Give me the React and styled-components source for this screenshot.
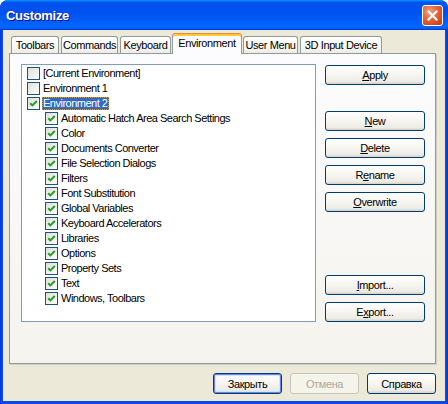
import React from 'react'
import styled, { createGlobalStyle } from 'styled-components'

const GlobalStyle = createGlobalStyle`
  html, body { margin: 0; padding: 0; background: #ffffff; }
  body { font-family: "Liberation Sans", Arial, sans-serif; }
`

const tabs = [
  { label: 'Toolbars', w: 48 },
  { label: 'Commands', w: 57 },
  { label: 'Keyboard', w: 51 },
  { label: 'Environment', w: 70, active: true },
  { label: 'User Menu', w: 55 },
  { label: '3D Input Device', w: 82 },
]

const items = [
  { label: '[Current Environment]', level: 0, checked: false },
  { label: 'Environment 1', level: 0, checked: false },
  { label: 'Environment 2', level: 0, checked: true, selected: true },
  { label: 'Automatic Hatch Area Search Settings', level: 1, checked: true },
  { label: 'Color', level: 1, checked: true },
  { label: 'Documents Converter', level: 1, checked: true },
  { label: 'File Selection Dialogs', level: 1, checked: true },
  { label: 'Filters', level: 1, checked: true },
  { label: 'Font Substitution', level: 1, checked: true },
  { label: 'Global Variables', level: 1, checked: true },
  { label: 'Keyboard Accelerators', level: 1, checked: true },
  { label: 'Libraries', level: 1, checked: true },
  { label: 'Options', level: 1, checked: true },
  { label: 'Property Sets', level: 1, checked: true },
  { label: 'Text', level: 1, checked: true },
  { label: 'Windows, Toolbars', level: 1, checked: true },
]

const CheckBox = ({ checked }) => (
  <CheckBoxWrap>
    <svg width="13" height="13" viewBox="0 0 13 13">
      <defs>
        <linearGradient id="cbg" x1="0" y1="0" x2="1" y2="1">
          <stop offset="0" stopColor="#dcdcd7" />
          <stop offset="1" stopColor="#ffffff" />
        </linearGradient>
      </defs>
      <rect x="0.5" y="0.5" width="12" height="12" fill="url(#cbg)" stroke="#1c5180" />
      {checked && (
        <path d="M3.2 6.2 L5.4 8.4 L9.8 4" fill="none" stroke="#21a121" strokeWidth="2" />
      )}
    </svg>
  </CheckBoxWrap>
)

const CloseIcon = () => (
  <svg width="11" height="11" viewBox="0 0 11 11">
    <path d="M1.5 1.5 L9.5 9.5 M9.5 1.5 L1.5 9.5" stroke="#ffffff" strokeWidth="2.2" strokeLinecap="square" />
  </svg>
)

const App = () => {
  return (
    <>
      <GlobalStyle />
      <Window>
        <TitleBar>
          <TitleText>Customize</TitleText>
          <CloseButton><CloseIcon /></CloseButton>
        </TitleBar>
        <Body>
          <TabStrip>
            {tabs.map(t => (
              <Tab key={t.label} $w={t.w} $active={t.active}>{t.label}</Tab>
            ))}
          </TabStrip>
          <Panel>
            <ListBox>
              {items.map(it => (
                <Row key={it.label} $level={it.level}>
                  <CheckBox checked={it.checked} />
                  <Label $selected={it.selected}>{it.label}</Label>
                </Row>
              ))}
            </ListBox>
            <ButtonColumn>
              <Button><u>A</u>pply</Button>
              <Button $mt={26}><u>N</u>ew</Button>
              <Button $mt={7}><u>D</u>elete</Button>
              <Button $mt={7}>R<u>e</u>name</Button>
              <Button $mt={7}><u>O</u>verwrite</Button>
              <Button $mt={63}><u>I</u>mport...</Button>
              <Button $mt={7}>E<u>x</u>port...</Button>
            </ButtonColumn>
          </Panel>
          <Footer>
            <FooterButton $default>Закрыть</FooterButton>
            <FooterButton disabled>Отмена</FooterButton>
            <FooterButton>Справка</FooterButton>
          </Footer>
        </Body>
      </Window>
    </>
  )
}

export default App

const Window = styled.div`
  width: 448px;
  height: 404px;
  box-sizing: border-box;
  display: flex;
  flex-direction: column;
  background: linear-gradient(90deg, #0831d9 0px, #0a4ae8 2px, #0a4ae8 446px, #0831d9 448px);
  border-radius: 8px 8px 0 0;
  overflow: hidden;
`

const TitleBar = styled.div`
  height: 30px;
  flex: none;
  display: flex;
  align-items: center;
  justify-content: space-between;
  padding: 0 5px 0 6px;
  background: linear-gradient(180deg, #0997ff 0%, #0053ee 8%, #0050ee 40%, #0066ff 88%, #0066ff 93%, #005bff 95%, #003dd7 96%, #003dd7 100%);
`

const TitleText = styled.span`
  color: #ffffff;
  font-weight: bold;
  font-size: 13px;
  letter-spacing: -0.3px;
  text-shadow: 1px 1px #0f1089;
  padding-top: 1px;
`

const CloseButton = styled.div`
  width: 21px;
  height: 21px;
  box-sizing: border-box;
  border: 1px solid #ffffff;
  border-radius: 3px;
  display: flex;
  align-items: center;
  justify-content: center;
  background: radial-gradient(circle at 35% 30%, #f2a07f 0%, #e4633b 45%, #d8481f 75%, #c53a16 100%);
`

const Body = styled.div`
  flex: 1;
  margin: 0 3px 3px;
  background: #ece9d8;
  padding: 3px 9px 0 6px;
  display: flex;
  flex-direction: column;
`

const TabStrip = styled.div`
  height: 20px;
  display: flex;
  align-items: flex-end;
  padding-left: 2px;
  position: relative;
  z-index: 1;
`

const Tab = styled.div`
  width: ${p => p.$w}px;
  height: ${p => (p.$active ? 21 : 17)}px;
  box-sizing: border-box;
  margin: ${p => (p.$active ? '0 1px -1px -1px' : '0 2px 0 0')};
  border: 1px solid #919b9c;
  border-bottom: none;
  border-radius: 3px 3px 0 0;
  border-top-color: ${p => (p.$active ? '#e68b2c' : '#919b9c')};
  box-shadow: ${p => (p.$active ? 'inset 0 2px #ffc73c' : 'none')};
  background: ${p => (p.$active ? '#fcfcfe' : 'linear-gradient(180deg, #ffffff 0%, #f7f7f4 60%, #ecebe5 100%)')};
  display: flex;
  align-items: center;
  justify-content: center;
  padding-bottom: ${p => (p.$active ? 2 : 0)}px;
  font-size: 11px;
  letter-spacing: -0.4px;
  color: #000000;
  white-space: nowrap;
`

const Panel = styled.div`
  flex: 1;
  border: 1px solid #919b9c;
  box-shadow: 1px 1px 0 #d0cebf;
  background: linear-gradient(180deg, #fcfcfe 0%, #f4f3ee 100%);
  display: flex;
  gap: 9px;
  padding: 10px 10px 0 11px;
`

const ListBox = styled.div`
  width: 295px;
  height: 258px;
  box-sizing: border-box;
  border: 1px solid #7f9db9;
  background: #ffffff;
  padding: 1px 0 0 5px;
`

const Row = styled.div`
  height: 15px;
  display: flex;
  align-items: center;
  padding-left: ${p => p.$level * 18}px;
`

const CheckBoxWrap = styled.span`
  width: 13px;
  height: 13px;
  display: flex;
  flex: none;
`

const Label = styled.span`
  margin-left: 2px;
  padding: 0 2px 0 1px;
  height: 13px;
  line-height: 13px;
  font-size: 11px;
  letter-spacing: -0.5px;
  white-space: nowrap;
  color: ${p => (p.$selected ? '#ffffff' : '#000000')};
  background: ${p => (p.$selected ? '#316ac5' : 'transparent')};
  outline: ${p => (p.$selected ? '1px dotted #ce953a' : 'none')};
  outline-offset: -1px;
`

const ButtonColumn = styled.div`
  width: 100px;
  display: flex;
  flex-direction: column;
  padding-top: 1px;
`

const Button = styled.button`
  width: 100%;
  height: 20px;
  margin-top: ${p => p.$mt || 0}px;
  box-sizing: border-box;
  border: 1px solid #003c74;
  border-radius: 3px;
  background: linear-gradient(180deg, #ffffff 0%, #f6f5f0 50%, #ecebe6 86%, #d6d0c5 100%);
  font-family: "Liberation Sans", Arial, sans-serif;
  font-size: 11px;
  letter-spacing: -0.4px;
  color: #000000;
  padding: 0;
  flex: none;
`

const Footer = styled.div`
  height: 37px;
  box-sizing: border-box;
  display: flex;
  justify-content: flex-end;
  gap: 8px;
  padding: 9px 0 0;
`

const FooterButton = styled(Button)`
  width: 69px;
  height: 21px;
  box-shadow: ${p => (p.$default ? 'inset 0 0 0 1px #6982ee, inset 0 0 0 2px #cee7ff' : 'none')};
  &:disabled {
    border-color: #c9c7ba;
    color: #aca899;
    background: #f5f4ea;
  }
`
